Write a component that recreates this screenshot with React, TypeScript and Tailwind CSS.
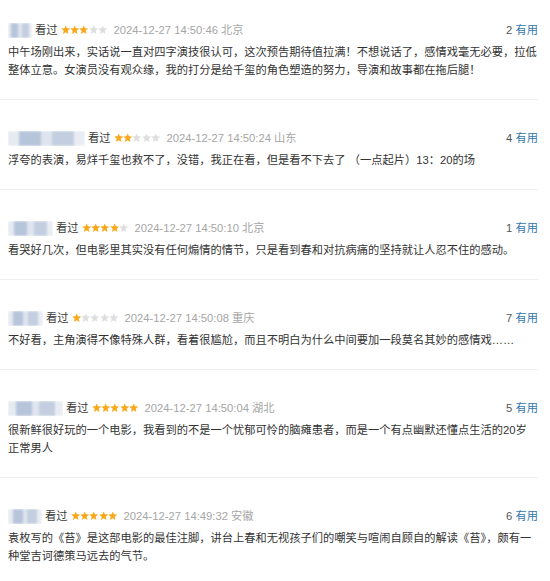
const FONT = "font-['Liberation_Sans','Noto_Sans_CJK_SC',sans-serif]";

type Review = {
  nameW: string;
  rating: number;
  time: string;
  useful: number;
  lines: string[];
};

const reviews: Review[] = [
  {
    nameW: "w-[24px]",
    rating: 3,
    time: "2024-12-27 14:50:46 北京",
    useful: 2,
    lines: [
      "中午场刚出来，实话说一直对四字演技很认可，这次预告期待值拉满！不想说话了，感情戏毫无必要，拉低",
      "整体立意。女演员没有观众缘，我的打分是给千玺的角色塑造的努力，导演和故事都在拖后腿！",
    ],
  },
  {
    nameW: "w-[77px]",
    rating: 2,
    time: "2024-12-27 14:50:24 山东",
    useful: 4,
    lines: ["浮夸的表演，易烊千玺也救不了，没错，我正在看，但是看不下去了 （一点起片）13：20的场"],
  },
  {
    nameW: "w-[45px]",
    rating: 4,
    time: "2024-12-27 14:50:10 北京",
    useful: 1,
    lines: ["看哭好几次，但电影里其实没有任何煽情的情节，只是看到春和对抗病痛的坚持就让人忍不住的感动。"],
  },
  {
    nameW: "w-[35px]",
    rating: 1,
    time: "2024-12-27 14:50:08 重庆",
    useful: 7,
    lines: ["不好看，主角演得不像特殊人群，看着很尴尬，而且不明白为什么中间要加一段莫名其妙的感情戏……"],
  },
  {
    nameW: "w-[55px]",
    rating: 5,
    time: "2024-12-27 14:50:04 湖北",
    useful: 5,
    lines: [
      "很新鲜很好玩的一个电影，我看到的不是一个忧郁可怜的脑瘫患者，而是一个有点幽默还懂点生活的20岁",
      "正常男人",
    ],
  },
  {
    nameW: "w-[34px]",
    rating: 5,
    time: "2024-12-27 14:49:32 安徽",
    useful: 6,
    lines: [
      "袁枚写的《苔》是这部电影的最佳注脚，讲台上春和无视孩子们的嘲笑与喧闹自顾自的解读《苔》，颇有一",
      "种堂吉诃德策马远去的气节。",
    ],
  },
];

function Star({ on }: { on: boolean }) {
  return (
    <svg viewBox="0 0 10 10" className="w-[9.4px] h-[9.4px]">
      <polygon
        points="5,0.4 6.3,3.5 9.7,3.8 7.1,6.1 7.9,9.5 5,7.7 2.1,9.5 2.9,6.1 0.3,3.8 3.7,3.5"
        fill={on ? "#f7a81b" : "#dedede"}
      />
    </svg>
  );
}

// 用户名已打码，用模糊色块代替
function BlurName({ w }: { w: string }) {
  return (
    <div className={`${w} h-[15px] overflow-hidden`}>
      <div className="flex w-full h-full blur-[1.3px]">
        <div className="flex-1 bg-[#e6ebf2]" />
        <div className="flex-[2] bg-[#b7c5db]" />
        <div className="flex-1 bg-[#dfe5ee]" />
        <div className="flex-[2] bg-[#c3cfe0]" />
        <div className="flex-1 bg-[#e9edf3]" />
      </div>
    </div>
  );
}

export default function App() {
  return (
    <div className={`w-[550px] h-[581px] bg-white overflow-hidden ${FONT}`}>
      <div className="w-[538px]">
        {reviews.map((r, i) => (
          <div
            key={i}
            className="pl-[8px] pt-[28px] first:pt-[20px] pb-[20px] border-b border-[#eeeeee]"
          >
            {/* Header */}
            <div className="flex items-center h-[20px] text-[11.25px]">
              <BlurName w={r.nameW} />
              <span className="ml-[3px] text-[#3a3a3a]">看过</span>
              <div className="ml-[3px] flex items-center">
                {[0, 1, 2, 3, 4].map((s) => (
                  <Star key={s} on={s < r.rating} />
                ))}
              </div>
              <span className="ml-[6px] text-[#a6a6a6]">{r.time}</span>
              <span className="ml-auto text-[#555555]">
                {r.useful} <span className="text-[#3377aa]">有用</span>
              </span>
            </div>

            {/* 正文 */}
            <p className="mt-[3px] text-[11.25px] leading-[18px] text-[#333333]">
              {r.lines.map((l, j) => (
                <span key={j}>
                  {j > 0 && <br />}
                  {l}
                </span>
              ))}
            </p>
          </div>
        ))}
      </div>
    </div>
  );
}
